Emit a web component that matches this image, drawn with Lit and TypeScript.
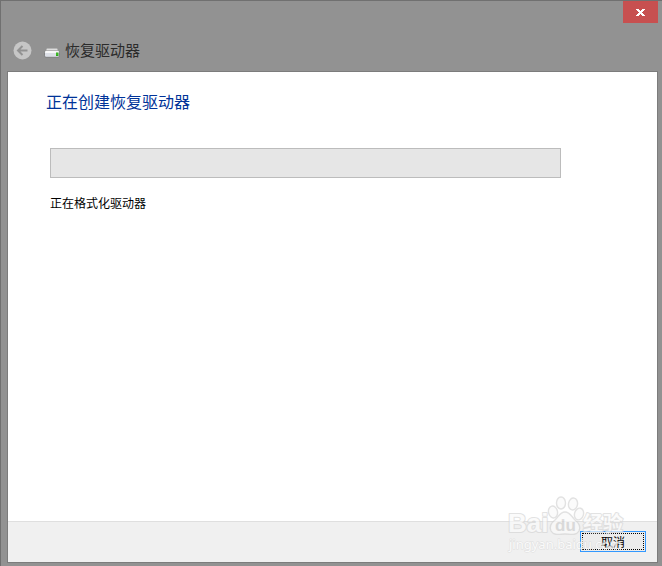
import { LitElement, html, css } from "lit";
import { customElement, property } from "lit/decorators.js";

@customElement("site-watermark")
export class SiteWatermark extends LitElement {
  static styles = css`
    :host {
      display: block;
      pointer-events: none;
    }
    svg {
      display: block;
    }
    .outlined {
      fill: #fafafa;
      stroke: #d6d6d6;
      stroke-width: 2;
      stroke-linejoin: round;
      paint-order: stroke;
    }
    .paw {
      fill: #fafafa;
      stroke: #d6d6d6;
      stroke-width: 1.4;
    }
    .latin {
      font: bold 26px "Liberation Sans", sans-serif;
    }
    .inner {
      font: bold 17px "Liberation Sans", sans-serif;
      fill: #d0d0d0;
    }
    .han {
      font: bold 20px "Noto Sans CJK SC", sans-serif;
    }
    .address {
      font: 13px "Noto Sans", sans-serif;
      fill: #ffffff;
      stroke: #d8d8d8;
      stroke-width: 1;
      paint-order: stroke;
    }
  `;

  render() {
    return html`
      <svg width="122" height="60" viewBox="0 0 122 60" aria-hidden="true">
        <text class="outlined latin" x="1" y="37">Bai</text>
        <g class="paw">
          <ellipse cx="46" cy="17" rx="4.5" ry="6" transform="rotate(-12 46 17)"></ellipse>
          <ellipse cx="54" cy="8" rx="4.5" ry="6"></ellipse>
          <ellipse cx="66" cy="9" rx="4.5" ry="6" transform="rotate(10 66 9)"></ellipse>
          <ellipse cx="72" cy="19" rx="4.5" ry="6" transform="rotate(15 72 19)"></ellipse>
          <path
            d="M58 17C53 17 52 21 48 25C44 28 42 32 44 36C47 41 53 39 58 39C63 39 69 41 72 36C74 32 72 28 68 25C64 21 63 17 58 17Z"
          ></path>
        </g>
        <text class="inner" x="48" y="36">du</text>
        <text class="outlined han" x="76" y="36">经验</text>
        <text class="address" x="2" y="54">jingyan.baidu.com</text>
      </svg>
    `;
  }
}

@customElement("app-root")
export class AppRoot extends LitElement {
  @property() heading = "正在创建恢复驱动器";
  @property() status = "正在格式化驱动器";

  static styles = css`
    :host {
      display: flex;
      flex-direction: column;
      box-sizing: border-box;
      min-height: 100vh;
      padding: 0 4px 3px 6px;
      border-top: 1px solid #707070;
      border-left: 1px solid #707070;
      background: #929292;
      font-family: "Noto Sans CJK SC", sans-serif;
      font-size: 12px;
    }
    .caption {
      display: flex;
      justify-content: flex-end;
    }
    .close {
      display: grid;
      place-items: center;
      width: 35px;
      height: 22px;
      padding: 0;
      border: 0;
      background: #c75050;
    }
    .nav {
      display: flex;
      align-items: center;
      height: 48px;
      padding: 6px 0 0 6px;
      box-sizing: border-box;
    }
    .back {
      display: block;
      padding: 0;
      border: 0;
      background: none;
    }
    svg {
      display: block;
    }
    .drive {
      margin: 6px 5px 0 11px;
    }
    .title {
      margin: 0;
      font-size: 15px;
      font-weight: 400;
      line-height: 20px;
      color: #2b2b2b;
    }
    .panel {
      position: relative;
      flex: 1;
      display: flex;
      flex-direction: column;
      border: 1px solid #7c7c7c;
      background: #ffffff;
    }
    .content {
      flex: 1;
      padding: 18px 96px 24px 38px;
    }
    h2 {
      margin: 0 0 36px;
      font-size: 16px;
      font-weight: 400;
      line-height: 22px;
      color: #003399;
    }
    .task {
      display: flex;
      flex-direction: column;
      padding-left: 4px;
    }
    progress {
      display: block;
      appearance: none;
      box-sizing: border-box;
      width: 100%;
      height: 30px;
      border: 1px solid #bcbcbc;
      background: #e6e6e6;
    }
    progress::-webkit-progress-bar {
      background: #e6e6e6;
    }
    progress::-webkit-progress-value {
      background: #06b025;
    }
    label {
      display: block;
      margin-top: 16px;
      line-height: 18px;
      color: #000000;
    }
    footer {
      display: flex;
      justify-content: flex-end;
      padding: 9px 11px 10px;
      border-top: 1px solid #dfdfdf;
      background: #f0f0f0;
    }
    .cancel {
      width: 66px;
      height: 21px;
      padding: 1px;
      border: 1px solid #3399ff;
      background: #ececec;
      font: inherit;
      line-height: 15px;
      color: #000000;
    }
    .focus {
      display: block;
      border: 1px dotted #000000;
    }
    site-watermark {
      position: absolute;
      right: 28px;
      bottom: 7px;
      opacity: 0.7;
    }
  `;

  render() {
    return html`
      <div class="caption">
        <button class="close" aria-label="关闭">
          <svg width="9" height="7" viewBox="0 0 9 7" shape-rendering="crispEdges">
            <path
              fill="#ffffff"
              d="M0 0H3V1H4V2H5V1H6V0H9V1H8V2H7V3H6V4H7V5H8V6H9V7H6V6H5V5H4V6H3V7H0V6H1V5H2V4H3V3H2V2H1V1H0Z"
            ></path>
          </svg>
        </button>
      </div>
      <header class="nav">
        <button class="back" aria-label="后退" disabled>
          <svg width="20" height="20" viewBox="0 0 20 20">
            <circle cx="9.5" cy="10.5" r="9" fill="#c6c6c6"></circle>
            <path
              d="M14.5 10.5H5.5M9.5 6L5 10.5L9.5 15"
              fill="none"
              stroke="#929292"
              stroke-width="2"
            ></path>
          </svg>
        </button>
        <svg class="drive" width="16" height="10" viewBox="0 0 16 10" aria-hidden="true">
          <path d="M3 0.5H13L15 4H1Z" fill="#dedede" stroke="#b4b4b4" stroke-width="0.6"></path>
          <rect x="0.5" y="3" width="15" height="6.3" rx="1.5" fill="#dcdfe6" stroke="#747474" stroke-width="0.8"></rect>
          <rect x="1" y="3" width="14" height="2" rx="1" fill="#f8f8f8"></rect>
          <rect x="12" y="4.5" width="2.5" height="3.5" fill="#2fa51c"></rect>
          <rect x="12.5" y="5" width="1" height="2" fill="#4ccf2c"></rect>
        </svg>
        <h1 class="title">恢复驱动器</h1>
      </header>
      <main class="panel">
        <section class="content">
          <h2>${this.heading}</h2>
          <div class="task">
            <progress id="job" max="100" value="0"></progress>
            <label for="job">${this.status}</label>
          </div>
        </section>
        <footer>
          <button class="cancel"><span class="focus">取消</span></button>
        </footer>
        <site-watermark></site-watermark>
      </main>
    `;
  }
}
